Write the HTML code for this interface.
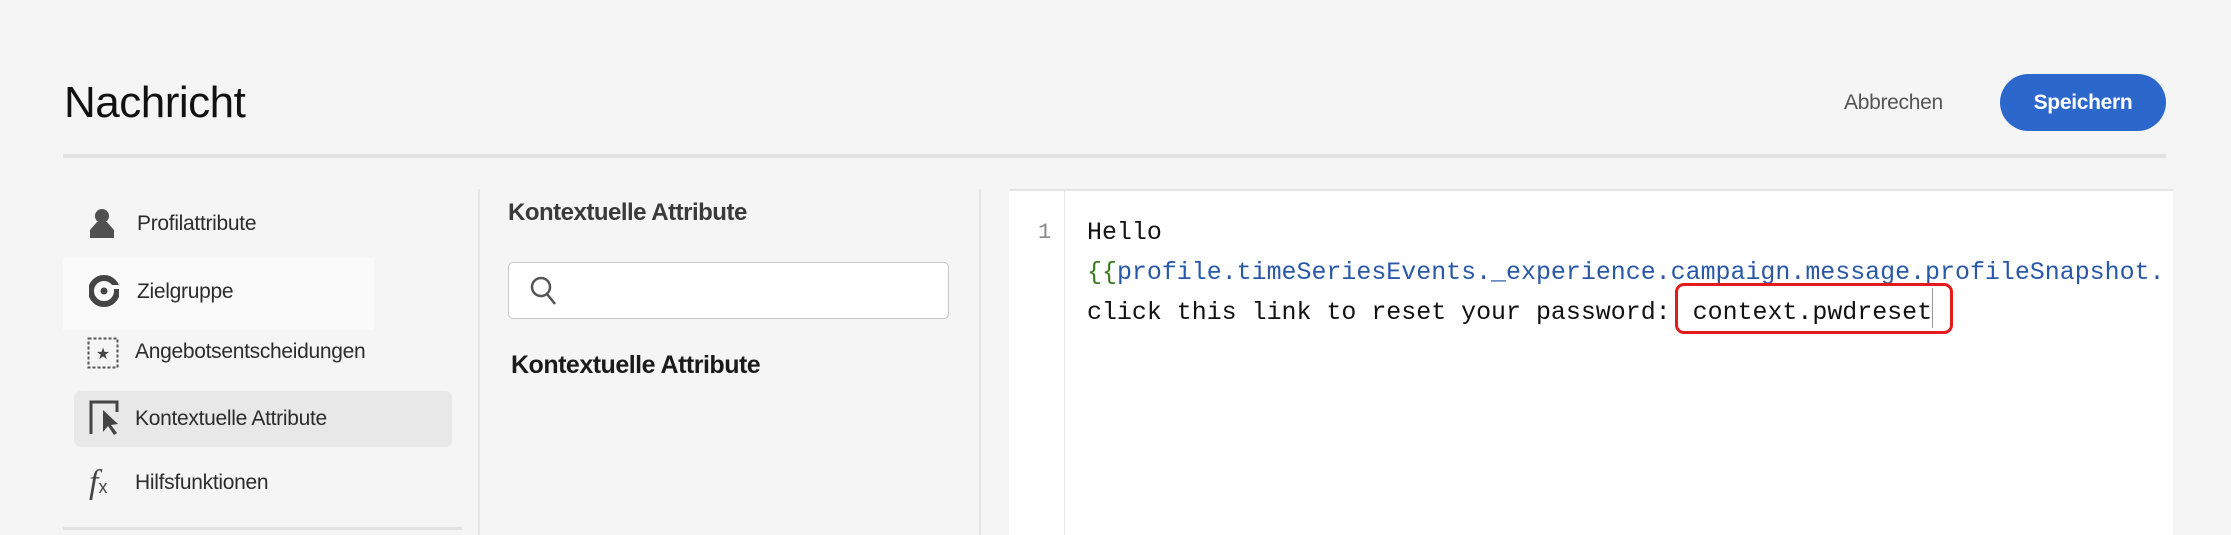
<!DOCTYPE html>
<html><head><meta charset="utf-8"><style>
*{margin:0;padding:0;box-sizing:border-box}
body{width:2231px;height:535px;background:#f5f5f5;font-family:"Liberation Sans",sans-serif;position:relative;overflow:hidden;color:#222}
.a{position:absolute;white-space:nowrap}
.side{font-size:21px;color:#2c2c2c;letter-spacing:-0.3px}
.mono{font-family:"Liberation Mono",monospace;font-size:24.95px;color:#111}
</style></head><body>
<div class="a" style="left:64px;top:78px;font-size:44px;color:#111;letter-spacing:-0.5px">Nachricht</div>
<div class="a" style="left:1844px;top:91px;font-size:21px;color:#555;letter-spacing:-0.3px">Abbrechen</div>
<div class="a" style="left:2000px;top:74px;width:166px;height:57px;border-radius:29px;background:#2c68cc;color:#fff;font-size:21px;font-weight:bold;text-align:center;line-height:57px;letter-spacing:-0.3px">Speichern</div>
<div class="a" style="left:63px;top:154px;width:2103px;height:4px;background:#e1e1e1"></div>

<div class="a" style="left:478px;top:189px;width:2px;height:346px;background:#e6e6e6"></div>
<div class="a" style="left:979px;top:189px;width:2px;height:346px;background:#e6e6e6"></div>

<div class="a" style="left:63px;top:258px;width:311px;height:72px;background:#fafafa"></div>
<div class="a" style="left:74px;top:391px;width:378px;height:56px;border-radius:7px;background:#e8e8e8"></div>

<svg class="a" style="left:88px;top:208px" width="28" height="32" viewBox="0 0 28 32"><circle cx="14" cy="8" r="7" fill="#505050"/><path d="M9 14h10l7 8v8H2v-8z" fill="#505050"/></svg>
<div class="a side" style="left:137px;top:212px">Profilattribute</div>
<svg class="a" style="left:89px;top:275px" width="30" height="32" viewBox="0 0 30 32"><circle cx="15" cy="16" r="13" fill="none" stroke="#444" stroke-width="6"/><rect x="16" y="10" width="14" height="4" fill="#fafafa"/><circle cx="15" cy="16" r="3.5" fill="#444"/></svg>
<div class="a side" style="left:137px;top:280px">Zielgruppe</div>
<svg class="a" style="left:87px;top:337px" width="32" height="32" viewBox="0 0 32 32"><rect x="1.5" y="1.5" width="29" height="29" fill="none" stroke="#555" stroke-width="2" stroke-dasharray="3 2"/><text x="16" y="22" font-size="16" text-anchor="middle" fill="#444">★</text></svg>
<div class="a side" style="left:135px;top:340px">Angebotsentscheidungen</div>
<svg class="a" style="left:89px;top:400px" width="32" height="36" viewBox="0 0 32 36"><path d="M2 34V2h26v10" fill="none" stroke="#444" stroke-width="3"/><path d="M14 10l0 22 5-6 6 9 3-2-6-8 7-1z" fill="#444"/></svg>
<div class="a side" style="left:135px;top:407px">Kontextuelle Attribute</div>
<div class="a" style="left:89px;top:464px;font-family:'Liberation Serif',serif;font-style:italic;font-size:34px;color:#444">f<span style="font-size:18px;font-style:normal;font-family:'Liberation Sans'">x</span></div>
<div class="a side" style="left:135px;top:471px">Hilfsfunktionen</div>
<div class="a" style="left:63px;top:527px;width:399px;height:3px;background:#e3e3e3"></div>

<div class="a" style="left:508px;top:199px;font-size:24px;color:#3a3a3a;font-weight:bold;letter-spacing:-0.5px">Kontextuelle Attribute</div>
<div class="a" style="left:508px;top:262px;width:441px;height:57px;background:#fff;border:1.5px solid #c8c8c8;border-radius:5px"></div>
<svg class="a" style="left:529px;top:275px" width="30" height="32" viewBox="0 0 30 32"><circle cx="12" cy="12" r="9" fill="none" stroke="#555" stroke-width="2.5"/><path d="M18 19l8 10" stroke="#555" stroke-width="2.5"/></svg>
<div class="a" style="left:511px;top:351px;font-size:25px;color:#1a1a1a;font-weight:bold;letter-spacing:-0.5px">Kontextuelle Attribute</div>

<div class="a" style="left:1009px;top:189px;width:1164px;height:346px;background:#fff;border-top:2px solid #e4e4e4"></div>
<div class="a" style="left:1064px;top:191px;width:1px;height:344px;background:#e8e8e8"></div>
<div class="a mono" style="left:1038px;top:220px;color:#888;font-size:22px">1</div>
<div class="a mono" style="left:1087px;top:219px">Hello</div>
<div class="a mono" style="left:1087px;top:259px;width:1086px;overflow:hidden"><span style="color:#3a7a1e">{{</span><span style="color:#2a58a8">profile.timeSeriesEvents._experience.campaign.message.profileSnapshot.</span></div>
<div class="a mono" style="left:1087px;top:299px">click this link to reset your password:<span style="margin-left:22px">context.pwdreset</span></div>
<div class="a" style="left:1675px;top:283px;width:278px;height:51px;border:3px solid #e41b1b;border-radius:9px"></div>
<div class="a" style="left:1932px;top:288px;width:1px;height:40px;background:#999"></div>
</body></html>
